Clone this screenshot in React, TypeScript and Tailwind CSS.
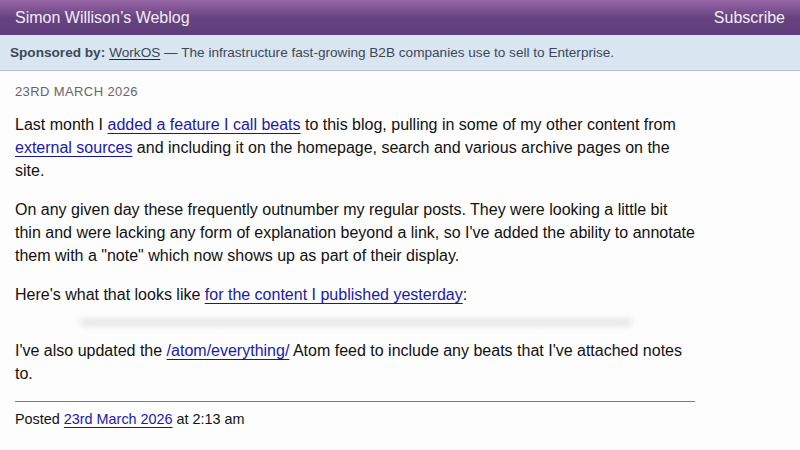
export default function App() {
  return (
    <div className="min-h-[450px] bg-[#fdfdfd] font-['Liberation_Sans',Arial,sans-serif] text-[#111]">
      <header className="flex h-[35px] items-center justify-between bg-gradient-to-b from-[#9a66a8] via-[#67447f] to-[#5d3d7a] px-[15px] text-[16px] text-[#f3ecf7]">
        <span>Simon Willison’s Weblog</span>
        <span>Subscribe</span>
      </header>
      <div className="flex h-[36px] items-center border-b border-[#b4c4d4] bg-[#d9e5f0] px-[10px] pt-[2px] text-[13.6px] text-[#3c4858]">
        <b className="mr-1">Sponsored by:</b>
        <span className="underline decoration-[#1a1a8c] underline-offset-2">WorkOS</span>
        <span>&nbsp;— The infrastructure fast-growing B2B companies use to sell to Enterprise.</span>
      </div>
      <main className="w-[710px] px-[15px] pt-[9px] text-[16px] leading-[23px]">
        <div className="text-[13px] uppercase tracking-[0.03em] text-[#666]">23rd March 2026</div>
        <p className="mt-[10px]">
          Last month I <a className="text-[#1a1aa8] underline decoration-[#1a1a8c] underline-offset-[3px]">added a feature I call beats</a> to this blog, pulling in some of my other content from{" "}
          <a className="text-[#1a1aa8] underline decoration-[#1a1a8c] underline-offset-[3px]">external sources</a> and including it on the homepage, search and various archive pages on the site.
        </p>
        <p className="mt-[16px]">
          On any given day these frequently outnumber my regular posts. They were looking a little bit thin and were lacking any form of explanation beyond a link, so I've added the ability to annotate them with a "note" which now shows up as part of their display.
        </p>
        <p className="mt-[16px]">
          Here's what that looks like <a className="text-[#1a1aa8] underline decoration-[#1a1a8c] underline-offset-[3px]">for the content I published yesterday</a>:
        </p>
        <div className="flex h-[33px] items-center pl-[65px]">
          <div className="h-[7px] w-[552px] rounded-full bg-[#e2e2e2] blur-[3px]" />
        </div>
        <p>
          I've also updated the <a className="text-[#1a1aa8] underline decoration-[#1a1a8c] underline-offset-[3px]">/atom/everything/</a> Atom feed to include any beats that I've attached notes to.
        </p>
        <div className="mt-[16px] border-t border-[#9a6aa6] pt-[7px] text-[14.4px] leading-[20px]">
          Posted <a className="text-[#1a1aa8] underline decoration-[#1a1a8c] underline-offset-[3px]">23rd March 2026</a> at 2:13 am
        </div>
      </main>
    </div>
  );
}
